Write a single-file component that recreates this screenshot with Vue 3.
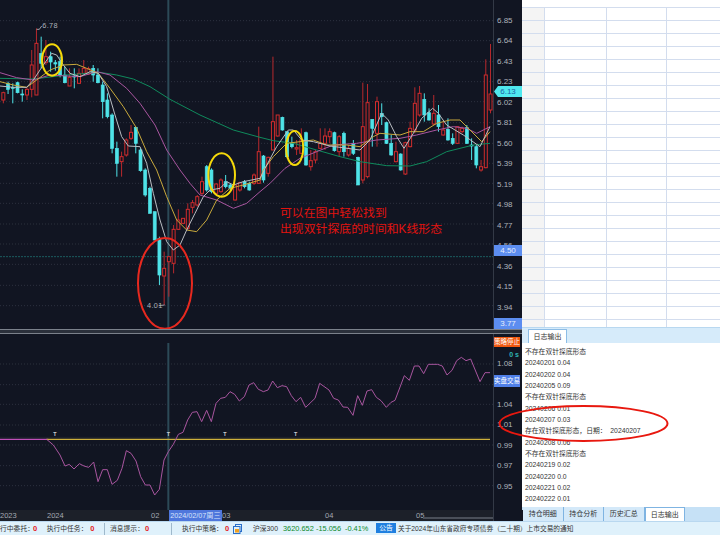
<script setup>
const step = 14.19
const raw = [
['r',275,278,300,310],['c',245,250,268,282],['c',250,262,264,310],['c',245,248,278,280],['c',268,282,285,305],
['r',262,268,285,300],['r',150,195,268,292],['r',85,130,285,285],['c',110,160,190,205],['r',120,170,188,195],
['c',155,170,186,215],['c',180,188,192,212],['c',170,185,225,232],['c',200,225,248,250],['r',205,232,258,258],
['c',205,228,231,265],['r',205,220,250,252],['r',180,205,220,222],['r',200,206,222,225],['c',195,205,225,245],
['c',205,225,248,250],['c',245,255,305,355],['c',280,300,350,355],['c',340,345,445,460],['c',425,445,490,530],
['r',455,470,485,530],['r',415,420,465,470],['r',375,397,415,420],['c',380,382,430,460],['c',445,450,512,515],
['c',505,510,585,590],['c',560,565,640,640],['c',635,635,720,720],['c',710,715,825,855],['r',755,805,828,915],
['r',770,770,785,890],['r',675,688,790,820],['r',628,660,688,690],['r',655,655,670,670],['r',610,628,685,690],
['r',600,608,622,640],['r',585,590,615,620],['r',530,545,580,585],['c',495,500,570,575],['c',505,510,575,580],
['r',550,552,580,580],['r',535,540,575,578],['c',525,545,560,565],['c',550,555,565,570],['r',555,555,600,602],
['r',545,548,570,575],['c',540,545,560,565],['c',545,550,570,572],['r',520,525,550,555],['r',380,455,550,552],
['c',465,468,540,548],['r',470,472,520,530],['r',170,365,450,450],['r',345,345,408,410],['c',350,352,390,392],
['c',395,395,470,475],['c',410,430,440,445],['r',420,443,447,465],['r',385,420,460,462],['c',395,398,495,497],
['r',450,482,500,512],['r',450,455,480,490],['r',385,430,445,447],['r',385,408,430,450],['r',385,395,410,430],
['c',395,398,452,455],['r',405,410,455,470],['c',395,400,455,470],['r',435,445,465,470],['c',420,430,460,465],
['c',470,472,555,555],['r',248,380,540,550],['r',252,308,530,535],['c',358,358,385,440],['r',290,305,400,440],
['c',310,340,350,375],['c',365,368,430,432],['c',405,430,465,467],['r',425,455,485,487],['c',460,462,510,512],
['r',425,428,522,525],['r',365,385,440,442],['r',262,310,390,400],['r',258,280,345,350],['c',280,298,345,365],
['c',325,338,360,362],['r',285,340,372,375],['c',315,345,380,395],['r',365,390,405,407],['c',355,388,420,422],
['c',400,415,430,435],['r',380,380,430,432],['r',380,385,395,400],['c',375,383,430,432],['c',415,435,438,480],
['c',435,440,495,505],['r',480,500,510,515],['r',178,225,503,505],['r',132,282,330,340]
]
const candles = raw.map((c, i) => ({ red: c[0] === 'r', x: 10 + step * i, high: c[1], top: c[2], bottom: c[3], low: c[4] }))

const shift = (pts) => pts.map(([x, y]) => `${x + 780},${y}`).join(' ')
const join = (pts) => pts.map(([x, y]) => `${x},${y}`).join(' ')

const ma5 = join([[0,258],[40,262],[80,262],[100,240],[130,195],[155,160],[170,165],[190,195],[210,220],[240,230],[270,215],[295,220],[320,260],[345,345],[365,410],[385,438],[420,440],[440,490],[460,580],[480,660],[500,725],[520,750],[540,735],[560,690],[585,640],[610,590],[630,570],[660,565],[680,545],[700,555],[730,545],[780,535]]) + ' ' +
  shift([[15,505],[50,440],[85,390],[100,390],[125,420],[160,425],[210,438],[300,450],[330,420],[365,340],[385,360],[410,410],[432,445],[460,400],[485,355],[518,325],[535,340],[560,375],[610,405],[660,440],[690,380]])
const ma10 = join([[0,245],[40,255],[80,262],[110,240],[150,210],[190,195],[230,193],[260,205],[295,220],[330,265],[370,320],[410,385],[440,455],[470,510],[500,590],[530,660],[560,690],[590,695],[620,660],[650,600],[690,565],[730,555],[780,540]]) + ' ' +
  shift([[10,510],[40,470],[80,430],[120,425],[160,420],[200,435],[260,435],[300,440],[340,410],[360,400],[420,405],[450,395],[490,395],[530,370],[570,360],[600,360],[630,390],[665,425],[690,395]])
const ma20 = join([[0,218],[50,233],[100,240],[150,225],[200,228],[240,230],[290,215],[330,225],[380,265],[420,310],[465,375],[500,450],[540,510],[570,550],[600,585],[650,600],[700,625],[740,610],[780,575],[810,550],[855,505]]) + ' ' +
  shift([[120,475],[170,455],[220,435],[290,430],[350,420],[420,415],[470,405],[530,390],[580,380],[620,385],[650,400],[690,380]])
const ma60 = join([[0,235],[100,237],[200,225],[300,217],[350,225],[400,237],[450,260],[510,298],[600,345],[700,390],[780,412]]) + ' ' +
  shift([[40,422],[100,430],[170,450],[240,470],[300,485],[380,497],[450,498],[500,485],[560,455],[640,435],[690,430]])

const kGrid = [62,122,185,245,305,368,430,490,550,610,672,732,793,856,917]
const oGrid = [87,149,208,270,330,392,452]
const prices = ['6.85','6.64','6.43','6.23','6.02','5.81','5.60','5.39','5.19','4.98','4.77','4.56','4.36','4.15','3.94']

const osc = join([[140,313],[160,330],[180,360],[195,393],[208,388],[222,402],[238,386],[252,393],[266,397],[281,381],[294,440],[308,404],[322,404],[336,448],[352,436],[366,400],[379,347],[393,355],[408,378],[422,425],[436,450],[450,450],[464,480],[478,463],[492,375],[505,350],[520,328],[535,298],[549,292],[563,255],[577,232],[591,230],[605,260],[620,226],[634,260],[648,205],[662,190],[676,187],[690,170],[704,178],[718,198],[733,185],[747,150],[761,143],[775,163]]) + ' ' +
  shift([[0,165],[10,170],[24,165],[38,138],[52,158],[66,152],[80,155],[94,182],[108,200],[122,187],[137,217],[165,190],[179,145],[207,165],[221,190],[235,195],[249,216],[263,217],[279,241],[293,182],[307,211],[321,168],[335,164],[349,187],[363,197],[379,217],[393,202],[405,196],[433,122],[448,136],[463,93],[477,93],[491,116],[505,88],[533,88],[547,93],[561,120],[576,106],[590,77],[604,67],[618,77],[632,72],[660,140],[675,113],[690,113]])
const tMarks = [165,505,675,887]

const timeLabels = [
  { text: '2023', x: 0 }, { text: '2024', x: 47 }, { text: '02', x: 151 },
  { text: '03', x: 222 }, { text: '04', x: 325 }, { text: '05', x: 416 }
]

const rows = Array.from({ length: 25 }, (_, i) => i)
const cols = [0, 1, 2, 3]

const logs = [
  { t: '不存在双针探底形态' }, { t: '20240201 0.04' }, { t: '20240202 0.04' }, { t: '20240205 0.09' },
  { t: '不存在双针探底形态' }, { t: '20240206 0.01' }, { t: '20240207 0.03' },
  { t: '存在双针探底形态，日期：  20240207' }, { t: '20240208 0.06' }, { t: '不存在双针探底形态' },
  { t: '20240219 0.02' }, { t: '20240220 0.0' }, { t: '20240221 0.02' }, { t: '20240222 0.01' }
]
const tabs = ['持仓明细', '持仓分析', '历史汇总', '日志输出']
const statusItems = [
  { label: '行中委托：', w: 46.7, gap: 33 }, { label: '执行中任务：', w: 58.3, gap: 43.5, sep: true },
  { label: '消息提示：', w: 62, gap: 35, sep: true }, { label: '执行中策略：', w: 51, gap: 43 }
]
</script>

<template>
  <div class="root">
    <div class="main">
      <div class="left">
        <div class="kline">
          <svg class="plot" viewBox="0 0 1479 987" width="493" height="329">
            <line v-for="y in kGrid" :key="y" x1="0" x2="1479" :y1="y" :y2="y" class="grid" />
            <line x1="0" x2="1479" y1="770" y2="770" class="level" />
            <rect x="502" y="0" width="6" height="987" class="cross" />
            <g v-for="(c, i) in candles" :key="i">
              <line :x1="c.x" :x2="c.x" :y1="c.high" :y2="c.low" :class="c.red ? 'wick-r' : 'wick-c'" />
              <rect :x="c.x - 4.5" :y="c.top" width="9" :height="Math.max(c.bottom - c.top, 3)" :class="c.red ? 'body-r' : 'body-c'" />
            </g>
            <polyline :points="ma60" class="ma m60" />
            <polyline :points="ma20" class="ma m20" />
            <polyline :points="ma10" class="ma m10" />
            <polyline :points="ma5" class="ma m5" />
            <polyline points="110,88 118,88 125,78" class="leader" />
            <text x="127" y="83" class="chart-val">6.78</text>
            <polyline points="476,917 494,915" class="leader" />
            <text x="441" y="924" class="chart-val">4.01</text>
            <ellipse cx="156" cy="180" rx="30" ry="47" class="yellow-ring" />
            <ellipse cx="665" cy="525" rx="40" ry="65" class="yellow-ring" />
            <ellipse cx="884" cy="444" rx="26" ry="51" class="yellow-ring" />
            <ellipse cx="495" cy="850" rx="81" ry="136" class="red-ring" />
            <text x="840" y="650" class="note">可以在图中轻松找到</text>
            <text x="840" y="698" class="note">出现双针探底的时间和K线形态</text>
          </svg>
          <div class="axis axis-top">
            <div v-for="p in prices" :key="p" class="tick">{{ p }}</div>
            <div class="tag tag-last">6.13</div>
            <div class="tag tag-cur">4.50</div>
            <div class="tag tag-low">3.77</div>
          </div>
        </div>
        <div class="sep"></div>
        <div class="osc">
          <svg class="plot" viewBox="0 -3 1479 528" width="493" height="176">
            <line v-for="y in oGrid" :key="y" x1="0" x2="1479" :y1="y" :y2="y" class="grid" />
            <line x1="0" x2="1470" y1="307" y2="307" class="faint" />
            <rect x="502" y="24" width="6" height="501" class="cross" />
            <line x1="0" x2="145" y1="313" y2="313" class="osc-pink" />
            <line x1="140" x2="1470" y1="313" y2="313" class="osc-yellow" />
            <polyline :points="osc" class="ma m20" />
            <text v-for="x in tMarks" :key="x" :x="x" y="302" class="t-mark">T</text>
          </svg>
          <div class="axis axis-bottom">
            <div class="badge badge-stop">策略停止</div>
            <div class="secs">0 s</div>
            <div class="tick tick-first">1.08</div>
            <div class="badge badge-real">实盘交易</div>
            <div class="tick">1.04</div>
            <div class="tick">1.01</div>
            <div class="tick">0.99</div>
            <div class="tick">0.97</div>
            <div class="tick">0.95</div>
          </div>
        </div>
        <div class="time">
          <span v-for="l in timeLabels" :key="l.text" class="time-label" :style="{ left: l.x + 'px' }">{{ l.text }}</span>
          <span class="time-cross">2024/02/07周三</span>
          <span class="scroll-thumb"></span>
          <span class="time-end"></span>
        </div>
      </div>
      <div class="right">
        <div class="sheet">
          <div v-for="r in rows" :key="r" class="sheet-row">
            <div class="cell cell-head"></div>
            <div v-for="c in cols" :key="c" class="cell"></div>
          </div>
        </div>
        <div class="log">
          <div class="log-strip"><div class="log-tab">日志输出</div></div>
          <div class="log-body">
            <div v-for="(l, i) in logs" :key="i" class="log-line">{{ l.t }}</div>
          </div>
          <div class="tabs">
            <div v-for="t in tabs" :key="t" class="tab" :class="{ active: t === '日志输出' }">{{ t }}</div>
          </div>
        </div>
      </div>
    </div>
    <div class="status">
      <div v-for="s in statusItems" :key="s.label" class="st-item" :class="{ 'st-sep': s.sep }" :style="{ width: s.w + 'px' }">
        <span class="st-label" :style="{ width: s.gap + 'px' }">{{ s.label }}</span><span class="st-red">0</span>
      </div>
      <svg class="st-icon" viewBox="0 0 9 10" width="9" height="10">
        <rect x="2.5" y="0.5" width="6" height="7" fill="#dff1fb" stroke="#2a6fc9" />
        <rect x="0.5" y="2.5" width="6.5" height="7" fill="#dff1fb" stroke="#2a6fc9" />
        <rect x="2" y="5" width="4" height="3.5" fill="#f0a020" />
      </svg>
      <span class="st-index">沪深300</span>
      <span class="st-num n1">3620.652</span>
      <span class="st-num n2">-15.056</span>
      <span class="st-num n3">-0.41%</span>
      <span class="st-notice">公告</span>
      <span class="st-text">关于2024年山东省政府专项债券（二十期）上市交易的通知</span>
    </div>
    <svg class="overlay" viewBox="0 0 720 535" width="720" height="535">
      <ellipse cx="583.5" cy="423.5" rx="84" ry="17.5" class="big-ring" />
    </svg>
  </div>
</template>

<style scoped>
.root {
  position: relative;
  width: 720px;
  height: 535px;
  overflow: hidden;
  display: flex;
  flex-direction: column;
  font-family: "Liberation Sans", "Noto Sans CJK SC", sans-serif;
  background: #fff;
}
.main { display: flex; height: 521px; }
.left { width: 522px; background: #111522; display: flex; flex-direction: column; }
.kline { height: 329px; display: flex; }
.osc { height: 176px; display: flex; }
.plot { display: block; flex: none; }
.sep { height: 5px; box-sizing: border-box; background: #2b303b; border-top: 1px solid #7b818b; border-bottom: 1px solid #7b818b; }
.grid { stroke: #3b404d; stroke-width: 2; stroke-dasharray: 3 6; }
.level { stroke: #1d6a6c; stroke-width: 2.5; stroke-dasharray: 6 3; }
.cross { fill: #2c4a57; }
.faint { stroke: #262a34; stroke-width: 2; }
.wick-r { stroke: #b8292d; stroke-width: 3; }
.wick-c { stroke: #4fe3e8; stroke-width: 3; }
.body-r { fill: #111522; stroke: #d02c2d; stroke-width: 3; }
.body-c { fill: #4fe3e8; stroke: #4fe3e8; stroke-width: 2; }
.ma { fill: none; stroke-width: 3; stroke-linejoin: round; }
.m5 { stroke: #b9bdc2; }
.m10 { stroke: #c8a93c; }
.m20 { stroke: #a8559f; }
.m60 { stroke: #0f8a5c; }
.leader { fill: none; stroke: #9a9ea6; stroke-width: 3; }
.chart-val { fill: #aeb2ba; font-size: 22px; letter-spacing: 1px; }
.yellow-ring { fill: none; stroke: #f5d90a; stroke-width: 6; }
.red-ring { fill: none; stroke: #e8291f; stroke-width: 6; }
.note { fill: #e2130f; font-size: 35.6px; }
.osc-pink { stroke: #c050b8; stroke-width: 3.5; }
.osc-yellow { stroke: #cdb03c; stroke-width: 3.5; }
.t-mark { fill: #c8ccd2; font-size: 16px; font-weight: bold; text-anchor: middle; }
.axis { position: relative; flex: none; width: 29px; box-sizing: border-box; border-left: 1px solid #333946; color: #aeb3bb; font-size: 8px; }
.axis-top { padding-top: 15.5px; }
.tick { height: 20.5px; line-height: 10px; padding-left: 3px; }
.tag { position: absolute; left: 0; right: 0; height: 11px; line-height: 11px; text-align: center; }
.tag-last { top: 86px; background: #4fe8ee; color: #1d5fa6; clip-path: polygon(0 50%, 4px 0, 100% 0, 100% 100%, 4px 100%); }
.tag-cur { top: 245px; background: #5c8df0; color: #e6eefc; }
.tag-low { top: 318px; background: #5c8df0; color: #e6eefc; }
.badge { height: 10px; line-height: 10px; width: 26px; font-size: 6.5px; color: #fff; text-align: center; white-space: nowrap; overflow: hidden; }
.badge-stop { margin-top: 2.5px; background: #f0570f; }
.badge-real { height: 12px; line-height: 12px; margin: 3px 0 12.5px; background: #4f7fe8; }
.secs { height: 11px; line-height: 11px; margin-top: 2.5px; text-align: right; padding-right: 3px; color: #2fb6b6; font-size: 7px; font-weight: bold; }
.tick-first { height: 13px; margin-top: -1px; }
.time { position: relative; height: 11px; background: #1c2029; color: #a4a9b2; font-size: 7.5px; line-height: 12px; }
.time-label { position: absolute; top: 0; }
.time-cross { position: absolute; left: 169px; top: 0; width: 53px; height: 11px; background: #4f77dc; color: #d8e4fb; font-size: 7.2px; text-align: center; white-space: nowrap; line-height: 11px; }
.scroll-thumb { position: absolute; left: 423px; width: 70px; top: 7px; height: 2px; background: #4a4f59; }
.time-end { position: absolute; left: 493px; top: 0; bottom: 0; width: 29px; background: #111522; border-left: 1px solid #333946; }
.right { width: 198px; display: flex; flex-direction: column; background: #fff; }
.sheet { height: 327px; overflow: hidden; padding-top: 7px; box-sizing: border-box; }
.sheet-row { display: flex; height: 13px; box-sizing: border-box; border-top: 1px solid #d3ddee; }
.cell { flex: none; width: 60.5px; height: 12px; border-left: 1px solid #d3ddee; box-sizing: border-box; }
.cell:nth-child(2) { width: 61.5px; }
.cell-head { width: 22px; background: #f4f4f4; border-left: 0; }
.log { flex: 1; display: flex; flex-direction: column; font-size: 6.8px; color: #333; min-height: 0; }
.log-strip { height: 16px; box-sizing: border-box; padding: 1px 0 0 6px; background: #d6ebfa; border-top: 1px solid #b9d8f0; }
.log-tab { width: 39px; height: 14px; line-height: 13px; text-align: center; background: #fff; border: 1px solid #8dbde6; border-bottom: 0; box-sizing: border-box; font-size: 7px; }
.log-body { flex: 1; padding: 3px 0 0 3px; background: #fff; overflow: hidden; }
.log-line { height: 11.33px; line-height: 11.33px; white-space: pre; }
.tabs { height: 14px; display: flex; background: #c6e1f6; padding-left: 1px; }
.tab { width: 40.5px; box-sizing: border-box; line-height: 13px; text-align: center; font-size: 7px; background: #d4e9f9; border-right: 1px solid #7fb4e2; }
.tab.active { background: #fff; border-left: 1px solid #7fb4e2; border-top: 1px solid #7fb4e2; }
.status { height: 14px; position: relative; display: flex; align-items: center; background: #dff1fb; font-size: 6.8px; line-height: 12px; color: #333; white-space: nowrap; border-top: 1px solid #b9d8f0; box-sizing: border-box; }
.st-item { display: flex; flex: none; align-items: center; box-sizing: border-box; }
.st-label { display: inline-block; flex: none; }
.st-red { color: #e5201c; font-weight: bold; font-size: 7.5px; }
.st-sep { border-right: 1px solid #9fb9cc; }
.st-sep:nth-child(2) { margin-right: 5px; }
.st-sep:nth-child(3) { margin-right: 10px; }
.st-icon { position: absolute; left: 233px; top: 2px; }
.st-index { position: absolute; left: 253px; }
.st-num { position: absolute; color: #0c8a2a; font-size: 7.4px; }
.n1 { left: 283px; }
.n2 { left: 316px; }
.n3 { left: 345px; }
.st-notice { position: absolute; left: 376px; top: 1px; width: 20px; height: 10px; line-height: 10px; text-align: center; background: #1f7fe0; color: #fff; }
.st-text { position: absolute; left: 398px; font-size: 6.7px; }
.overlay { position: absolute; left: 0; top: 0; pointer-events: none; }
.big-ring { fill: none; stroke: #e8180f; stroke-width: 2; }
</style>
